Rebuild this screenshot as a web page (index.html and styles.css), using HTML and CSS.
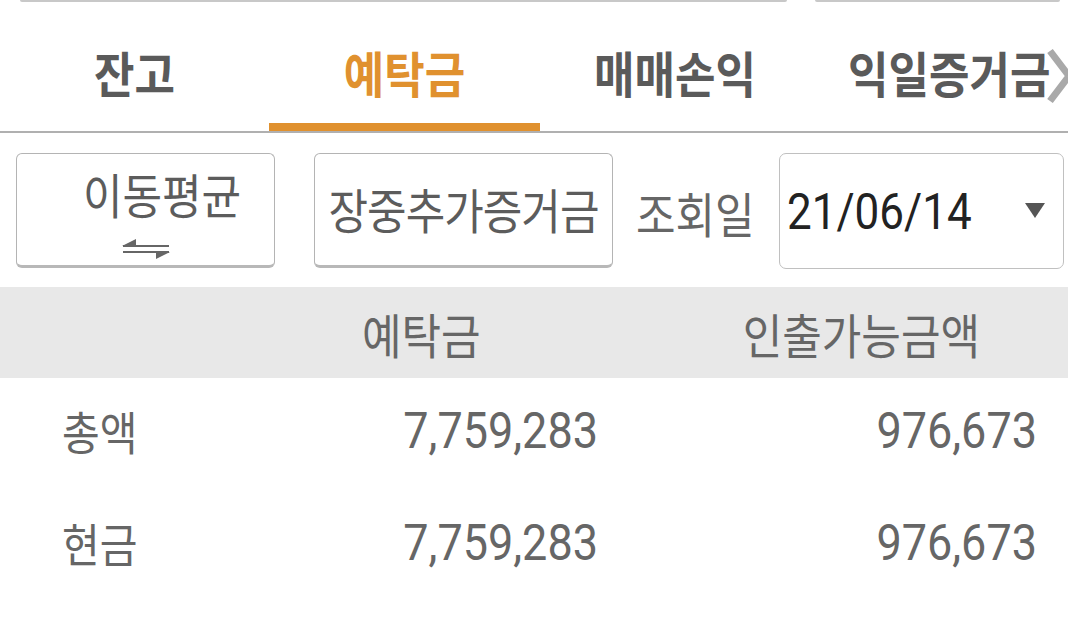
FILE: index.html
```html
<!DOCTYPE html>
<html lang="ko">
<head>
<meta charset="utf-8">
<link rel="stylesheet" href="styles.css">
</head>
<body>
<div class="remnant">
  <div class="rb rb-a"></div>
  <div class="rb rb-b"></div>
</div>
<nav class="tabs">
  <div class="tab"><span class="t">잔고</span></div>
  <div class="tab active"><span class="t">예탁금</span></div>
  <div class="tab"><span class="t">매매손익</span></div>
  <div class="tab last"><span class="t">익일증거금</span></div>
  <svg class="chev" width="26" height="56" viewBox="0 0 26 56"><polyline points="4,3 23,28 4,53" fill="none" stroke="#a9a9a9" stroke-width="7"/></svg>
</nav>
<section class="controls">
  <div class="btn btn-ma">
    <span class="t btn-label">이동평균</span>
    <svg class="swap" width="50" height="22" viewBox="0 0 50 22">
      <line x1="2" y1="8" x2="48" y2="8" stroke="#666" stroke-width="2"/>
      <polygon points="1,8 15,1 15,8" fill="#666"/>
      <line x1="2" y1="14" x2="48" y2="14" stroke="#666" stroke-width="2"/>
      <polygon points="49,14 35,14 35,21" fill="#666"/>
    </svg>
  </div>
  <div class="btn btn-margin"><span class="t btn-label">장중추가증거금</span></div>
  <div class="date-label"><span class="t">조회일</span></div>
  <div class="select">
    <span class="t date">21/06/14</span>
    <span class="caret"></span>
  </div>
</section>
<div class="table-head">
  <span class="t h1">예탁금</span>
  <span class="t h2">인출가능금액</span>
</div>
<div class="trow">
  <span class="t label">총액</span>
  <span class="t num n1">7,759,283</span>
  <span class="t num n2">976,673</span>
</div>
<div class="trow">
  <span class="t label">현금</span>
  <span class="t num n1">7,759,283</span>
  <span class="t num n2">976,673</span>
</div>
</body>
</html>
```

FILE: styles.css
```css
html, body {
  margin: 0;
  padding: 0;
  background: #fff;
  width: 1068px;
  height: 620px;
  overflow: hidden;
  font-family: Roboto, "Noto Sans CJK KR", sans-serif;
  color: #666;
}

.t {
  display: inline-block;
  transform: scaleY(1.12);
}

.remnant {
  display: flex;
  height: 2px;
  padding-left: 20px;
}
.rb {
  height: 0;
  border-bottom: 2px solid #c8c8c8;
  border-radius: 0 0 6px 6px;
}
.rb-a { width: 767px; }
.rb-b { width: 245px; margin-left: 28px; }

.tabs {
  position: relative;
  display: flex;
  height: 129px;
  border-bottom: 2px solid #b0b0b0;
  overflow: hidden;
}
.tab {
  flex: 0 0 270px;
  display: flex;
  align-items: center;
  justify-content: center;
  font-family: "Noto Sans CJK KR", sans-serif;
  font-weight: 700;
  font-size: 44px;
  color: #5a5a5a;
  padding-top: 18px;
  box-sizing: border-box;
  border-bottom: 8px solid transparent;
}
.tab:first-child { flex-basis: 269px; }
.tab.active {
  color: #e0912f;
  border-bottom-color: #e0912f;
  flex-basis: 271px;
}
.tab.last { justify-content: flex-start; padding-left: 38px; }
.chev {
  position: absolute;
  right: -4px;
  top: 46px;
}

.controls {
  display: flex;
  align-items: center;
  height: 115px;
  margin-top: 20px;
  padding-left: 16px;
}
.btn {
  box-sizing: border-box;
  height: 115px;
  border: 1.5px solid #b4b4b4;
  border-bottom: 3px solid #b8b8b8;
  border-radius: 6px;
  display: flex;
  flex-direction: column;
  align-items: center;
  justify-content: center;
  font-family: "Noto Sans CJK KR", sans-serif;
  font-size: 43px;
  color: #5c5c5c;
}
.btn-ma {
  width: 259px;
  justify-content: flex-start;
  padding-top: 12px;
}
.btn-ma .btn-label { margin-left: 33px; line-height: 54px; }
.swap { margin-top: 18px; margin-left: 0; }
.btn-margin {
  width: 299px;
  margin-left: 39px;
  padding-bottom: 4px;
}
.btn-margin .btn-label { letter-spacing: -1px; }
.date-label {
  box-sizing: border-box;
  width: 166px;
  padding-left: 23px;
  font-family: "Noto Sans CJK KR", sans-serif;
  font-size: 43px;
  color: #666;
  padding-top: 2px;
}
.select {
  box-sizing: border-box;
  width: 285px;
  height: 116px;
  border: 1.5px solid #c0c0c0;
  border-radius: 7px;
  display: flex;
  align-items: center;
  padding-left: 7px;
  padding-right: 18px;
}
.date {
  font-size: 44px;
  color: #222;
  flex: 1;
  padding-top: 2px;
  transform-origin: left center;
}
.caret {
  width: 0;
  height: 0;
  border-left: 10px solid transparent;
  border-right: 10px solid transparent;
  border-top: 15px solid #555;
}

.table-head {
  margin-top: 19px;
  height: 91px;
  background: #e8e8e8;
  display: flex;
  align-items: center;
  font-family: "Noto Sans CJK KR", sans-serif;
  font-size: 43px;
  color: #666;
}
.h1 { margin-left: 362px; }
.h2 { margin-left: 262px; }

.trow {
  box-sizing: border-box;
  height: 112px;
  padding-bottom: 8px;
  display: flex;
  align-items: center;
  padding-left: 62px;
}
.label {
  width: 200px;
  font-family: "Noto Sans CJK KR", sans-serif;
  font-size: 41px;
  color: #666;
}
.num {
  text-align: right;
  font-size: 45px;
  color: #666;
}
.n1 { width: 336px; }
.n2 { width: 439px; }
```
